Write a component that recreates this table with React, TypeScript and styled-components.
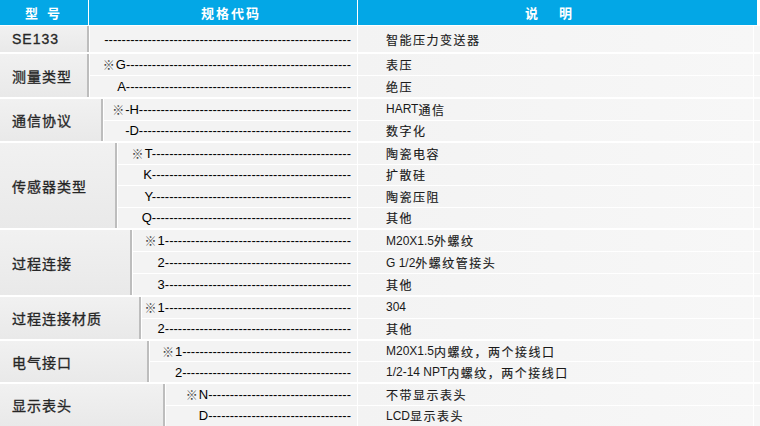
import React from 'react';
import styled, { createGlobalStyle } from 'styled-components';

const GlobalStyle = createGlobalStyle`
  html, body { margin: 0; padding: 0; background: #ffffff; }
  body {
    font-family: "Liberation Sans", Arial, "Noto Sans CJK SC", sans-serif;
    -webkit-font-smoothing: antialiased;
  }
`;

const Page = styled.div`
  width: 760px;
  height: 426px;
  overflow: hidden;
  background: #ffffff;
  display: flex;
  flex-direction: column;
  gap: 2px;
`;

const Header = styled.div`
  height: 25px;
  flex: none;
  margin-bottom: -1px;
  display: grid;
  grid-template-columns: 88px 268px 399px;
  column-gap: 1px;
`;

const HeadCell = styled.div<{ $shift?: number; $spacing?: number }>`
  background: #03a7e6;
  color: #ffffff;
  font-family: "Noto Sans CJK SC", "Liberation Sans", sans-serif;
  font-weight: 700;
  font-size: 13px;
  letter-spacing: ${(p) => p.$spacing ?? 2}px;
  display: flex;
  align-items: center;
  justify-content: center;
  padding-left: ${(p) => Math.max(0, p.$shift ?? 0)}px;
  padding-right: ${(p) => Math.max(0, -(p.$shift ?? 0))}px;
  white-space: pre;
`;

const Section = styled.div<{ $h: number }>`
  height: ${(p) => p.$h}px;
  flex: none;
  display: flex;
  gap: 1px;
`;

const Label = styled.div<{ $w: number }>`
  width: ${(p) => p.$w}px;
  flex: none;
  box-sizing: border-box;
  border-right: 2px solid #bdbdbd;
  background: linear-gradient(180deg, #f1f1f1 0%, #e9e9e9 100%);
  display: flex;
  align-items: center;
  padding-left: 12px;
  font-family: "Liberation Sans", "Noto Sans CJK SC", sans-serif;
  font-size: 14px;
  font-weight: 400;
  -webkit-text-stroke: 0.3px #262626;
  letter-spacing: 1px;
  color: #262626;
  white-space: nowrap;
`;

const Rows = styled.div`
  flex: 1;
  min-width: 0;
  display: flex;
  flex-direction: column;
  gap: 1px;
`;

const Row = styled.div`
  flex: 1;
  min-height: 0;
  display: flex;
  gap: 1px;
`;

const Code = styled.div`
  flex: 1;
  min-width: 0;
  background: #f3f3f3;
  display: flex;
  align-items: center;
  justify-content: flex-end;
  padding-right: 6px;
  overflow: hidden;
  white-space: nowrap;
  font-size: 13px;
  color: #000000;
`;

const Mark = styled.span`
  font-family: "Noto Sans CJK SC", sans-serif;
  font-size: 12px;
  color: #444444;
  margin-right: 1px;
`;

const Desc = styled.div`
  width: 395px;
  flex: none;
  box-sizing: border-box;
  background: linear-gradient(90deg, #f3f3f3 0%, #f7f7f7 100%);
  display: flex;
  align-items: center;
  padding-left: 28px;
  font-size: 12px;
  color: #1a1a1a;
  white-space: nowrap;
`;

const Cjk = styled.span`
  font-family: "Noto Sans CJK SC", sans-serif;
  letter-spacing: 1.5px;
  -webkit-text-stroke: 0.15px #1a1a1a;
`;

const Tail = styled.div`
  width: 6px;
  flex: none;
  background: #f6f6f6;
`;

type RowData = { mark?: boolean; code: string; dashes: number; desc: string };
type SectionData = { label: string; h: number; w: number; rows: RowData[] };

const sections: SectionData[] = [
  { label: 'SE133', h: 26, w: 89, rows: [{ code: '', dashes: 57, desc: '智能压力变送器' }] },
  {
    label: '测量类型', h: 43, w: 89,
    rows: [
      { mark: true, code: 'G', dashes: 52, desc: '表压' },
      { code: 'A', dashes: 52, desc: '绝压' },
    ],
  },
  {
    label: '通信协议', h: 42, w: 103,
    rows: [
      { mark: true, code: '-H', dashes: 49, desc: 'HART通信' },
      { code: '-D', dashes: 49, desc: '数字化' },
    ],
  },
  {
    label: '传感器类型', h: 85, w: 117,
    rows: [
      { mark: true, code: 'T', dashes: 46, desc: '陶瓷电容' },
      { code: 'K', dashes: 46, desc: '扩散硅' },
      { code: 'Y', dashes: 46, desc: '陶瓷压阻' },
      { code: 'Q', dashes: 46, desc: '其他' },
    ],
  },
  {
    label: '过程连接', h: 65, w: 132,
    rows: [
      { mark: true, code: '1', dashes: 43, desc: 'M20X1.5外螺纹' },
      { code: '2', dashes: 43, desc: 'G 1/2外螺纹管接头' },
      { code: '3', dashes: 43, desc: '其他' },
    ],
  },
  {
    label: '过程连接材质', h: 42, w: 141,
    rows: [
      { mark: true, code: '1', dashes: 43, desc: '304' },
      { code: '2', dashes: 43, desc: '其他' },
    ],
  },
  {
    label: '电气接口', h: 41, w: 149,
    rows: [
      { mark: true, code: '1', dashes: 39, desc: 'M20X1.5内螺纹，两个接线口' },
      { code: '2', dashes: 39, desc: '1/2-14 NPT内螺纹，两个接线口' },
    ],
  },
  {
    label: '显示表头', h: 42, w: 165,
    rows: [
      { mark: true, code: 'N', dashes: 33, desc: '不带显示表头' },
      { code: 'D', dashes: 33, desc: 'LCD显示表头' },
    ],
  },
];

const CJK_RE = /([\u3000-\u303f\u4e00-\u9fff\uff00-\uffef]+)/;

const DescText: React.FC<{ text: string }> = ({ text }) => {
  const parts = text.split(CJK_RE).filter(Boolean);
  return (
    <>
      {parts.map((part, i) =>
        CJK_RE.test(part) ? <Cjk key={i}>{part}</Cjk> : <span key={i}>{part}</span>
      )}
    </>
  );
};

export default function App() {
  return (
    <>
      <GlobalStyle />
      <Page>
        <Header>
          <HeadCell $spacing={3}>型 号</HeadCell>
          <HeadCell $shift={16}>规格代码</HeadCell>
          <HeadCell $shift={-14} $spacing={4}>说　明</HeadCell>
        </Header>
        {sections.map((s) => (
          <Section key={s.label} $h={s.h}>
            <Label $w={s.w}>{s.label}</Label>
            <Rows>
              {s.rows.map((r, i) => (
                <Row key={i}>
                  <Code>
                    {r.mark && <Mark>※</Mark>}
                    <span>{r.code + '-'.repeat(r.dashes)}</span>
                  </Code>
                  <Desc>
                    <DescText text={r.desc} />
                  </Desc>
                  <Tail />
                </Row>
              ))}
            </Rows>
          </Section>
        ))}
      </Page>
    </>
  );
}
